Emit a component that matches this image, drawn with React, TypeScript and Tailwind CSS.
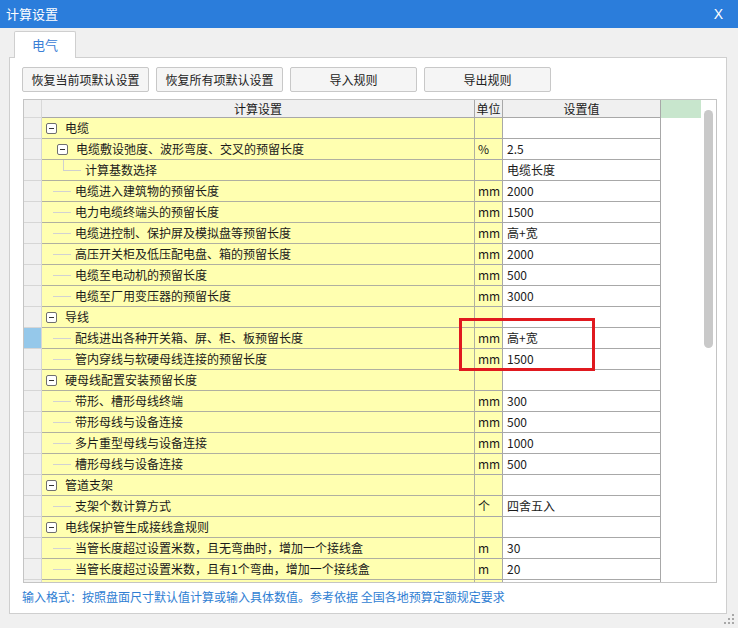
import React from "react";

type Row = {
  t: "g1" | "g2" | "c1" | "c2";
  label: string;
  unit?: string;
  value?: string;
  sel?: boolean;
};

const rows: Row[] = [
  { t: "g1", label: "电缆" },
  { t: "g2", label: "电缆敷设弛度、波形弯度、交叉的预留长度", unit: "%", value: "2.5" },
  { t: "c2", label: "计算基数选择", value: "电缆长度" },
  { t: "c1", label: "电缆进入建筑物的预留长度", unit: "mm", value: "2000" },
  { t: "c1", label: "电力电缆终端头的预留长度", unit: "mm", value: "1500" },
  { t: "c1", label: "电缆进控制、保护屏及模拟盘等预留长度", unit: "mm", value: "高+宽" },
  { t: "c1", label: "高压开关柜及低压配电盘、箱的预留长度", unit: "mm", value: "2000" },
  { t: "c1", label: "电缆至电动机的预留长度", unit: "mm", value: "500" },
  { t: "c1", label: "电缆至厂用变压器的预留长度", unit: "mm", value: "3000" },
  { t: "g1", label: "导线" },
  { t: "c1", label: "配线进出各种开关箱、屏、柜、板预留长度", unit: "mm", value: "高+宽", sel: true },
  { t: "c1", label: "管内穿线与软硬母线连接的预留长度", unit: "mm", value: "1500" },
  { t: "g1", label: "硬母线配置安装预留长度" },
  { t: "c1", label: "带形、槽形母线终端", unit: "mm", value: "300" },
  { t: "c1", label: "带形母线与设备连接", unit: "mm", value: "500" },
  { t: "c1", label: "多片重型母线与设备连接", unit: "mm", value: "1000" },
  { t: "c1", label: "槽形母线与设备连接", unit: "mm", value: "500" },
  { t: "g1", label: "管道支架" },
  { t: "c1", label: "支架个数计算方式", unit: "个", value: "四舍五入" },
  { t: "g1", label: "电线保护管生成接线盒规则" },
  { t: "c1", label: "当管长度超过设置米数，且无弯曲时，增加一个接线盒", unit: "m", value: "30" },
  { t: "c1", label: "当管长度超过设置米数，且有1个弯曲，增加一个接线盒", unit: "m", value: "20" },
  { t: "c1", label: "" },
];

function MinusBox() {
  return (
    <span className="flex h-[11px] w-[11px] shrink-0 items-center justify-center rounded-[2px] border border-[#6f6f6f] bg-white">
      <span className="h-px w-[5px] bg-[#333]" />
    </span>
  );
}

function TreeCell({ row }: { row: Row }) {
  if (row.t === "g1") {
    return (
      <div className="flex h-full items-center pl-[4px]">
        <MinusBox />
        <span className="ml-[8px]">{row.label}</span>
      </div>
    );
  }
  if (row.t === "g2") {
    return (
      <div className="flex h-full items-center pl-[15px]">
        <MinusBox />
        <span className="ml-[8px]">{row.label}</span>
      </div>
    );
  }
  if (row.t === "c2") {
    return (
      <div className="flex h-full pl-[21px]">
        <span className="h-[11px] w-[18px] shrink-0 border-b border-l border-[#cfcfcf]" />
        <span className="ml-[4px] self-center">{row.label}</span>
      </div>
    );
  }
  return (
    <div className="flex h-full items-center pl-[11px]">
      <span className="h-px w-[18px] shrink-0 bg-[#d2d2d2]" />
      <span className="ml-[4px]">{row.label}</span>
    </div>
  );
}

function ResizeGrip() {
  const dots = [
    [8, 0],
    [4, 4],
    [8, 4],
    [0, 8],
    [4, 8],
    [8, 8],
  ];
  return (
    <svg width="10" height="10" viewBox="0 0 10 10">
      {dots.map(([x, y], i) => (
        <rect key={i} x={x} y={y} width="2" height="2" fill="#a8a8a8" />
      ))}
    </svg>
  );
}

export default function App() {
  return (
    <div className="relative h-[628px] w-[738px] overflow-hidden bg-[#f0f0f0] font-['Microsoft_YaHei','Noto_Sans_CJK_SC',sans-serif] text-[12px] text-[#1a1a1a]">
      {/* Title bar */}
      <div className="flex h-[28px] items-center justify-between bg-[#2b7ddb] pl-[6px] pr-[15px] text-white">
        <span className="text-[13px]">计算设置</span>
        <span className="font-['Liberation_Sans',sans-serif] text-[14px]">X</span>
      </div>

      {/* Tab */}
      <div className="flex pl-[14px] pt-[3px]">
        <div className="relative z-10 -mb-px flex h-[27px] w-[62px] items-center justify-center rounded-t-[2px] border border-b-0 border-[#cfcfcf] bg-white text-[13px] text-[#3a80d6]">
          电气
        </div>
      </div>

      {/* Panel */}
      <div className="ml-[9px] h-[557px] w-[718px] border border-[#cfcfcf] bg-white">
        {/* Buttons */}
        <div className="flex gap-[7px] pl-[12px] pt-[9px]">
          {["恢复当前项默认设置", "恢复所有项默认设置", "导入规则", "导出规则"].map((b) => (
            <button
              key={b}
              className="flex h-[25px] w-[127px] items-center justify-center rounded-[2px] border border-[#c8c8c8] bg-[#f5f5f5] text-[12px] text-[#222]"
            >
              {b}
            </button>
          ))}
        </div>

        {/* Table */}
        <div className="ml-[13px] mt-[7px] flex h-[484px] w-[694px] border border-[#c4c4c4] bg-white">
          <div className="w-[677px] overflow-hidden">
            {/* Header */}
            <div className="flex h-[18px]">
              <div className="w-[18px] shrink-0 border-b border-r border-[#d8d8d8] bg-[#f0f0f0]" />
              <div className="flex w-[433px] shrink-0 items-center justify-center border-b border-r border-[#a8a8a8] bg-[#f0f0f0]">
                计算设置
              </div>
              <div className="flex w-[28px] shrink-0 items-center justify-center border-b border-r border-[#a8a8a8] bg-[#f0f0f0]">
                单位
              </div>
              <div className="flex w-[158px] shrink-0 items-center justify-center border-b border-r border-[#a8a8a8] bg-[#f0f0f0]">
                设置值
              </div>
              <div className="w-[40px] shrink-0 bg-[#c8e6cd]" />
            </div>
            {rows.map((row, i) => (
              <div key={i} className="flex h-[21px] leading-[20px]">
                <div
                  className={`w-[18px] shrink-0 border-b border-r border-[#d6d6d6] ${
                    row.sel ? "bg-[#95c8ea]" : "bg-[#f0f0f0]"
                  }`}
                />
                <div className="w-[433px] shrink-0 whitespace-nowrap border-b border-r border-[#b0b0a0] bg-[#ffffb0]">
                  <TreeCell row={row} />
                </div>
                <div className="w-[28px] shrink-0 border-b border-r border-[#a8a8a8] bg-[#ffffb0] pl-[3px]">
                  {row.unit}
                </div>
                <div className="w-[158px] shrink-0 whitespace-nowrap border-b border-r border-[#a8a8a8] bg-white pl-[4px]">
                  {row.value}
                </div>
              </div>
            ))}
          </div>
          {/* Scrollbar */}
          <div className="w-[15px] pl-[3px] pt-[10px]">
            <div className="h-[238px] w-[9px] rounded-[5px] bg-[#c9c9c9]" />
          </div>
        </div>

        {/* Footer hint */}
        <div className="pl-[12px] pt-[6px] text-[12px] leading-[16px] text-[#2f7ed3]">
          输入格式：按照盘面尺寸默认值计算或输入具体数值。参考依据 全国各地预算定额规定要求
        </div>
      </div>

      {/* Highlight box */}
      <div className="absolute left-[459px] top-[318px] h-[53px] w-[136px] border-[3px] border-[#e0191f]" />

      {/* Resize grip */}
      <div className="absolute bottom-[4px] right-[4px]">
        <ResizeGrip />
      </div>
    </div>
  );
}
